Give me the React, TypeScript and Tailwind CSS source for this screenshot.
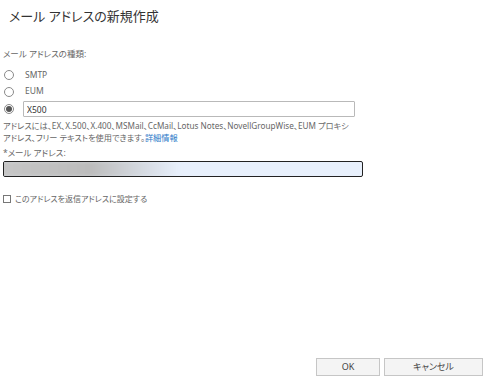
import { useState } from 'react';

const font =
  "font-['Noto_Sans','Noto_Sans_CJK_JP',sans-serif] [font-feature-settings:'palt']";

type RadioProps = {
  checked: boolean;
  onSelect: () => void;
};

function Radio({ checked, onSelect }: RadioProps) {
  return (
    <button
      onClick={onSelect}
      className="w-[10px] h-[10px] rounded-full border border-[#8a8a8a] bg-white flex items-center justify-center shrink-0"
    >
      {checked && <span className="w-[6px] h-[6px] rounded-full bg-[#555]"></span>}
    </button>
  );
}

export default function App() {
  const [type, setType] = useState('X500');
  const [isReply, setIsReply] = useState(false);

  return (
    <div className={`h-[386px] w-[494px] bg-white flex flex-col text-[#555] ${font}`}>
      <h1 className="pl-[9px] pt-[5px] text-[13px] leading-[22px] text-[#333]">
        メール アドレスの新規作成
      </h1>

      <div className="pl-[3px] mt-[21px] text-[8.5px] leading-[12px] text-[#666]">
        メール アドレスの種類:
      </div>

      <div className="flex flex-col pl-[4px] mt-[7px] text-[8.5px] text-[#666]">
        <div className="h-[16px] flex items-center gap-[11px]">
          <Radio checked={type === 'SMTP'} onSelect={() => setType('SMTP')} />
          <span>SMTP</span>
        </div>
        <div className="h-[17px] flex items-center gap-[11px]">
          <Radio checked={type === 'EUM'} onSelect={() => setType('EUM')} />
          <span>EUM</span>
        </div>
        <div className="h-[18px] flex items-center gap-[9px]">
          <Radio checked={type === 'X500'} onSelect={() => setType('X500')} />
          <input
            defaultValue="X500"
            className="w-[332px] h-[16px] border border-[#b9b9b9] rounded-[1px] px-[3px] text-[8.5px] text-[#333] outline-none"
          />
        </div>
      </div>

      <p className="pl-[3px] mt-[2px] text-[8.2px] leading-[12px] text-[#666] whitespace-nowrap">
        アドレスには、EX、X.500、X.400、MSMail、CcMail、Lotus Notes、NovellGroupWise、EUM プロキシ
        <br />
        アドレス、フリー テキストを使用できます。
        <a className="text-[#2a78c8] cursor-pointer">詳細情報</a>
      </p>

      <div className="pl-[3px] mt-[3px] text-[8.5px] leading-[12px] text-[#666]">*メール アドレス:</div>

      <div className="ml-[3px] mt-[2px] w-[360px] h-[16px] border-[1.5px] border-[#222] rounded-[2px] bg-[#e8f0fc] relative overflow-hidden">
        <div className="absolute left-[-4px] top-[-2px] w-[180px] h-[18px] bg-gradient-to-r from-[#c6c6c6] via-[#bcbcbc] to-[#e8f0fc] blur-[2px]"></div>
      </div>

      <label className="pl-[3px] mt-[16px] flex items-center gap-[4px] text-[8px] text-[#666] cursor-pointer">
        <input
          type="checkbox"
          checked={isReply}
          onChange={() => setIsReply(!isReply)}
          className="w-[8px] h-[8px] m-0 appearance-none border border-[#777] bg-white checked:bg-[#555]"
        />
        このアドレスを返信アドレスに設定する
      </label>

      <div className="mt-auto pb-[10px] pr-[11px] flex justify-end gap-[4px]">
        <button className="w-[64px] h-[18px] border border-[#c6c6c6] bg-[#f4f4f4] text-[9px] text-[#444]">
          OK
        </button>
        <button className="w-[99px] h-[18px] border border-[#c6c6c6] bg-[#f4f4f4] text-[9px] text-[#444]">
          キャンセル
        </button>
      </div>
    </div>
  );
}
